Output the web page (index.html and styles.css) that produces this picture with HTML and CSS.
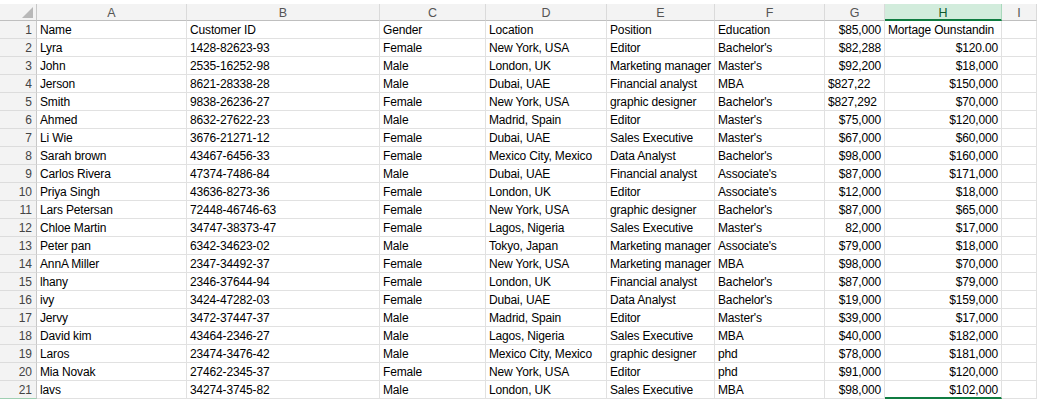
FILE: index.html
```html
<!DOCTYPE html>
<html>
<head>
<meta charset="utf-8">
<link rel="stylesheet" href="styles.css">
</head>
<body>
<div class="sheet">
  <div class="ch corner"><svg class="tri" width="11" height="11" viewBox="0 0 11 11"><polygon points="11,0 11,11 0,11" fill="#b8b8b8"/></svg></div>
  <div class="ch">A</div><div class="ch">B</div><div class="ch">C</div><div class="ch">D</div><div class="ch">E</div><div class="ch">F</div><div class="ch">G</div><div class="ch sel">H</div><div class="ch">I</div>

  <div class="rh">1</div><div class="c">Name</div><div class="c">Customer ID</div><div class="c">Gender</div><div class="c">Location</div><div class="c">Position</div><div class="c">Education</div><div class="c r">$85,000</div><div class="c">Mortage Ounstandin</div><div class="c"></div>
  <div class="rh">2</div><div class="c">Lyra</div><div class="c">1428-82623-93</div><div class="c">Female</div><div class="c">New York, USA</div><div class="c">Editor</div><div class="c">Bachelor's</div><div class="c r">$82,288</div><div class="c r">$120.00</div><div class="c"></div>
  <div class="rh">3</div><div class="c">John</div><div class="c">2535-16252-98</div><div class="c">Male</div><div class="c">London, UK</div><div class="c">Marketing manager</div><div class="c">Master's</div><div class="c r">$92,200</div><div class="c r">$18,000</div><div class="c"></div>
  <div class="rh">4</div><div class="c">Jerson</div><div class="c">8621-28338-28</div><div class="c">Male</div><div class="c">Dubai, UAE</div><div class="c">Financial analyst</div><div class="c">MBA</div><div class="c">$827,22</div><div class="c r">$150,000</div><div class="c"></div>
  <div class="rh">5</div><div class="c">Smith</div><div class="c">9838-26236-27</div><div class="c">Female</div><div class="c">New York, USA</div><div class="c">graphic designer</div><div class="c">Bachelor's</div><div class="c">$827,292</div><div class="c r">$70,000</div><div class="c"></div>
  <div class="rh">6</div><div class="c">Ahmed</div><div class="c">8632-27622-23</div><div class="c">Male</div><div class="c">Madrid, Spain</div><div class="c">Editor</div><div class="c">Master's</div><div class="c r">$75,000</div><div class="c r">$120,000</div><div class="c"></div>
  <div class="rh">7</div><div class="c">Li Wie</div><div class="c">3676-21271-12</div><div class="c">Female</div><div class="c">Dubai, UAE</div><div class="c">Sales Executive</div><div class="c">Master's</div><div class="c r">$67,000</div><div class="c r">$60,000</div><div class="c"></div>
  <div class="rh">8</div><div class="c">Sarah brown</div><div class="c">43467-6456-33</div><div class="c">Female</div><div class="c">Mexico City, Mexico</div><div class="c">Data Analyst</div><div class="c">Bachelor's</div><div class="c r">$98,000</div><div class="c r">$160,000</div><div class="c"></div>
  <div class="rh">9</div><div class="c">Carlos Rivera</div><div class="c">47374-7486-84</div><div class="c">Male</div><div class="c">Dubai, UAE</div><div class="c">Financial analyst</div><div class="c">Associate's</div><div class="c r">$87,000</div><div class="c r">$171,000</div><div class="c"></div>
  <div class="rh">10</div><div class="c">Priya Singh</div><div class="c">43636-8273-36</div><div class="c">Female</div><div class="c">London, UK</div><div class="c">Editor</div><div class="c">Associate's</div><div class="c r">$12,000</div><div class="c r">$18,000</div><div class="c"></div>
  <div class="rh">11</div><div class="c">Lars Petersan</div><div class="c">72448-46746-63</div><div class="c">Female</div><div class="c">New York, USA</div><div class="c">graphic designer</div><div class="c">Bachelor's</div><div class="c r">$87,000</div><div class="c r">$65,000</div><div class="c"></div>
  <div class="rh">12</div><div class="c">Chloe Martin</div><div class="c">34747-38373-47</div><div class="c">Female</div><div class="c">Lagos, Nigeria</div><div class="c">Sales Executive</div><div class="c">Master's</div><div class="c r">82,000</div><div class="c r">$17,000</div><div class="c"></div>
  <div class="rh">13</div><div class="c">Peter pan</div><div class="c">6342-34623-02</div><div class="c">Male</div><div class="c">Tokyo, Japan</div><div class="c">Marketing manager</div><div class="c">Associate's</div><div class="c r">$79,000</div><div class="c r">$18,000</div><div class="c"></div>
  <div class="rh">14</div><div class="c">AnnA Miller</div><div class="c">2347-34492-37</div><div class="c">Female</div><div class="c">New York, USA</div><div class="c">Marketing manager</div><div class="c">MBA</div><div class="c r">$98,000</div><div class="c r">$70,000</div><div class="c"></div>
  <div class="rh">15</div><div class="c">lhany</div><div class="c">2346-37644-94</div><div class="c">Female</div><div class="c">London, UK</div><div class="c">Financial analyst</div><div class="c">Bachelor's</div><div class="c r">$87,000</div><div class="c r">$79,000</div><div class="c"></div>
  <div class="rh">16</div><div class="c">ivy</div><div class="c">3424-47282-03</div><div class="c">Female</div><div class="c">Dubai, UAE</div><div class="c">Data Analyst</div><div class="c">Bachelor's</div><div class="c r">$19,000</div><div class="c r">$159,000</div><div class="c"></div>
  <div class="rh">17</div><div class="c">Jervy</div><div class="c">3472-37447-37</div><div class="c">Male</div><div class="c">Madrid, Spain</div><div class="c">Editor</div><div class="c">Master's</div><div class="c r">$39,000</div><div class="c r">$17,000</div><div class="c"></div>
  <div class="rh">18</div><div class="c">David kim</div><div class="c">43464-2346-27</div><div class="c">Male</div><div class="c">Lagos, Nigeria</div><div class="c">Sales Executive</div><div class="c">MBA</div><div class="c r">$40,000</div><div class="c r">$182,000</div><div class="c"></div>
  <div class="rh">19</div><div class="c">Laros</div><div class="c">23474-3476-42</div><div class="c">Male</div><div class="c">Mexico City, Mexico</div><div class="c">graphic designer</div><div class="c">phd</div><div class="c r">$78,000</div><div class="c r">$181,000</div><div class="c"></div>
  <div class="rh">20</div><div class="c">Mia Novak</div><div class="c">27462-2345-37</div><div class="c">Female</div><div class="c">New York, USA</div><div class="c">Editor</div><div class="c">phd</div><div class="c r">$91,000</div><div class="c r">$120,000</div><div class="c"></div>
  <div class="rh last">21</div><div class="c">lavs</div><div class="c">34274-3745-82</div><div class="c">Male</div><div class="c">London, UK</div><div class="c">Sales Executive</div><div class="c">MBA</div><div class="c r">$98,000</div><div class="c r active">$102,000</div><div class="c"></div>
</div>
</body>
</html>
```

FILE: styles.css
```css
* { box-sizing: border-box; }
html, body { margin: 0; padding: 0; background: #ffffff; }
body {
  padding-top: 4px;
  font-family: "Liberation Sans", Arial, sans-serif;
  font-size: 12px;
  letter-spacing: -0.15px;
  color: #000;
  overflow: hidden;
}
.sheet {
  display: grid;
  grid-template-columns: 37px 150px 193px 106px 121px 108px 110px 60px 117px 1fr;
  grid-template-rows: 17px;
  grid-auto-rows: 18px;
  width: 1037px;
}
.ch {
  background: #f3f3f3;
  border-right: 1px solid #dadada;
  border-bottom: 1px solid #bfbfbf;
  color: #555;
  font-size: 12.5px;
  letter-spacing: 0;
  display: flex;
  align-items: center;
  justify-content: center;
  line-height: 14px;
  padding-top: 2px;
}
.ch.corner {
  justify-content: flex-end;
  align-items: flex-end;
  padding: 0 3px 2px 0;
  border-right: 1px solid #c8c8c8;
}
.tri { display: block; }
.ch.sel {
  background: #d2ecdc;
  color: #0f5a2e;
  border-bottom: 2px solid #107c41;
  border-right: 1px solid #a9d8bc;
}
.rh {
  background: #f3f3f3;
  border-right: 1px solid #c8c8c8;
  border-bottom: 1px solid #dcdcdc;
  color: #444;
  letter-spacing: 0;
  padding: 0 4px 1px 0;
  display: flex;
  align-items: flex-end;
  justify-content: flex-end;
  line-height: 14px;
}
.rh.last { border-bottom: 1px solid #9fcfb2; }
.c {
  border-right: 1px solid #e1e1e1;
  border-bottom: 1px solid #e1e1e1;
  padding: 0 3px 1px 3px;
  display: flex;
  align-items: flex-end;
  line-height: 14px;
  white-space: nowrap;
  overflow: hidden;
}
.c.r { justify-content: flex-end; }
.c.active { border-bottom: 2px solid #107c41; padding-bottom: 0; }
```
